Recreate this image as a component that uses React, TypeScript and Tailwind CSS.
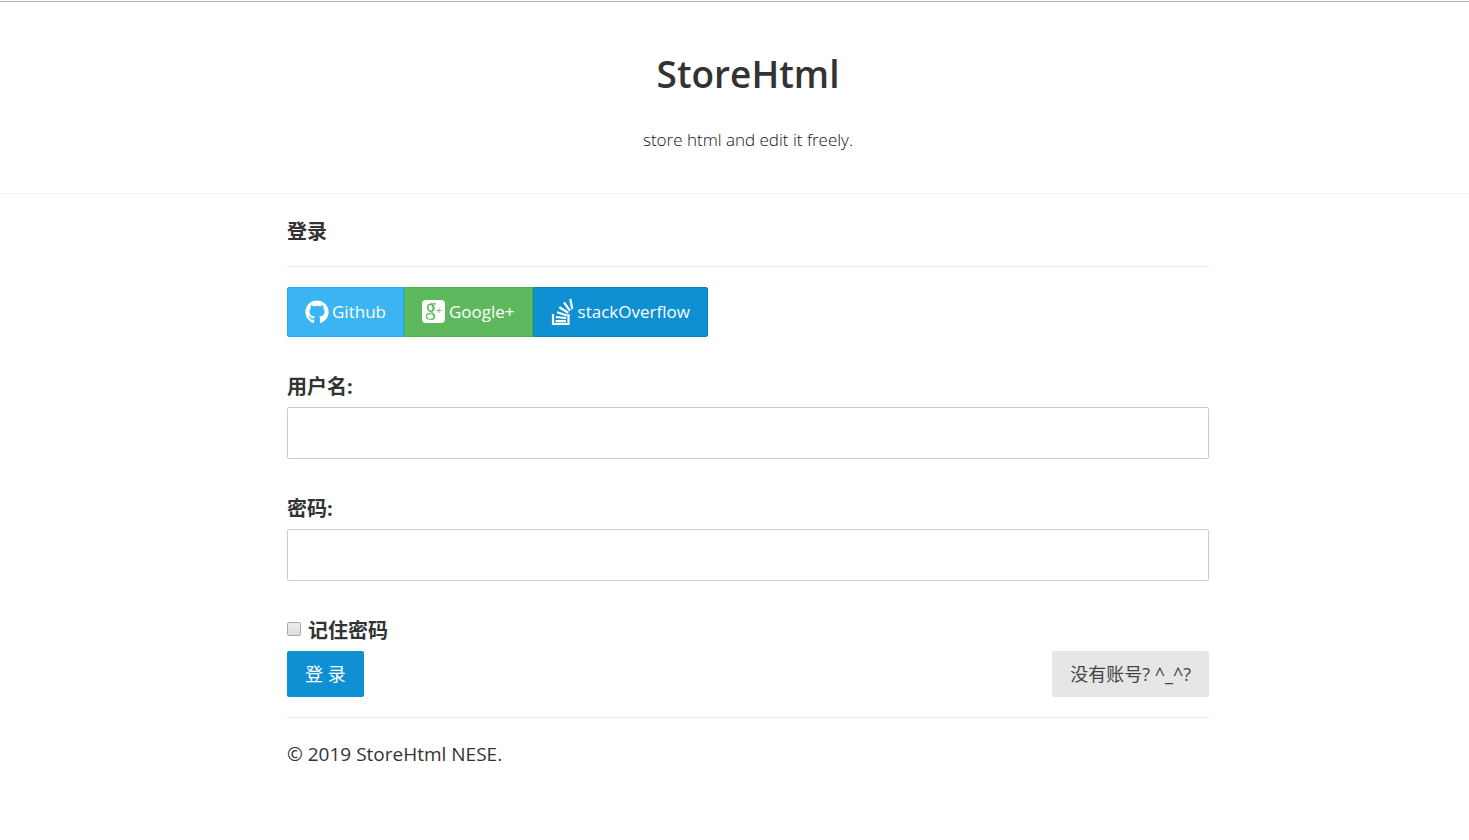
import type { ReactNode } from "react";
import { FaGithub } from "react-icons/fa";

function GooglePlusIcon() {
  return (
    <svg viewBox="0 0 24 24" className="size-6" aria-hidden="true">
      <rect x="0" y="0" width="23" height="23" rx="4" fill="white" />
      <g fill="none" stroke="#5eb95e">
        <ellipse cx="8.500" cy="7.800" rx="2.700" ry="3.500" strokeWidth="1.500" transform="rotate(-12 8.500 7.800)" />
        <path d="M14 3.800H8.500M10.500 4.800c2.500 2 2 4.500.2 6C9 12 9.500 12.500 11.100 13.700 13 15.200 12.700 17 12 18" strokeWidth="1.200" />
        <ellipse cx="8.300" cy="16.500" rx="4" ry="2.800" strokeWidth="1.200" transform="rotate(8 8.300 16.500)" />
        <path d="M17 8v5M14.500 10.500h5" strokeWidth="0.800" />
      </g>
    </svg>
  );
}

function StackOverflowIcon() {
  return (
    <svg viewBox="0 0 24 28" className="h-7 w-6" aria-hidden="true">
      <g fill="none" stroke="white" strokeWidth="2.200">
        <path d="M2 16v10h15.500V16" />
        <path d="M4.500 23.200h10.500M4.800 19l10.400 1.200M6 14.200l10 3.300M8.300 9.200l9 5.600M13 4.500l6 8.200M19.300 1l2 10.200" />
      </g>
    </svg>
  );
}

function SocialButton({ className, icon, children }: { className: string; icon: ReactNode; children: ReactNode }) {
  return (
    <a href="#" className={`flex h-[50px] items-center gap-[3px] border px-[17px] text-[17px] text-white ${className}`}>
      {icon}
      <span>{children}</span>
    </a>
  );
}

function Field({ id, label, type }: { id: string; label: string; type: string }) {
  return (
    <div className="mb-[34px]">
      <label htmlFor={id} className="mb-1 block text-xl leading-8 font-bold">
        {label}
      </label>
      <input id={id} type={type} className="block h-[52px] w-full rounded-xs border border-[#cccccc] bg-white px-2 text-xl" />
    </div>
  );
}

export default function App() {
  return (
    <div className="min-h-screen bg-white font-['Open_Sans','Noto_Sans_CJK_SC',sans-serif] text-[#333333]">
      <header className="mt-px border-t border-b border-t-[#b0b4b4] border-b-[#eeeeee] pt-[46px] pb-[39px] pl-[27px] text-center">
        <h1 className="text-[37px] leading-[52px] font-semibold">StoreHtml</h1>
        <p className="mt-[26px] text-[17px] leading-7 font-light text-[#111111]">store html and edit it freely.</p>
      </header>
      <div className="pl-[27px]">
        <main className="mx-auto max-w-[922px]">
          <h3 className="pt-[22px] text-xl leading-8 font-bold">登录</h3>
          <hr className="mt-[18px] mb-5 border-[#eeeeee]" />
          <div className="mb-[34px] flex">
            <SocialButton className="rounded-l-xs border-[#23abf0] bg-[#3bb4f2]" icon={<FaGithub className="size-6" />}>
              Github
            </SocialButton>
            <SocialButton className="border-[#4db14d] bg-[#5eb95e]" icon={<GooglePlusIcon />}>
              Google+
            </SocialButton>
            <SocialButton className="rounded-r-xs border-[#0c80ba] bg-[#0e90d2]" icon={<StackOverflowIcon />}>
              stackOverflow
            </SocialButton>
          </div>
          <form>
            <Field id="username" label="用户名:" type="text" />
            <Field id="password" label="密码:" type="password" />
            <div className="flex items-center gap-[7px]">
              <input
                id="remember"
                type="checkbox"
                className="mb-1 size-3.5 appearance-none rounded-xs border border-[#a8a8a8] bg-linear-to-b from-[#eeeeee] to-[#dcdcdc]"
              />
              <label htmlFor="remember" className="text-xl leading-8 font-bold">
                记住密码
              </label>
            </div>
            <div className="mt-1 flex justify-between">
              <button type="submit" className="h-[46px] rounded-xs bg-[#0e90d2] px-[18px] text-lg text-white">
                登 录
              </button>
              <button type="button" className="h-[46px] rounded-xs bg-[#e6e6e6] px-[18px] text-lg text-[#444444]">
                没有账号? ^_^?
              </button>
            </div>
          </form>
          <hr className="my-5 border-[#eeeeee]" />
          <p className="text-[19px] leading-8">© 2019 StoreHtml NESE.</p>
        </main>
      </div>
    </div>
  );
}
